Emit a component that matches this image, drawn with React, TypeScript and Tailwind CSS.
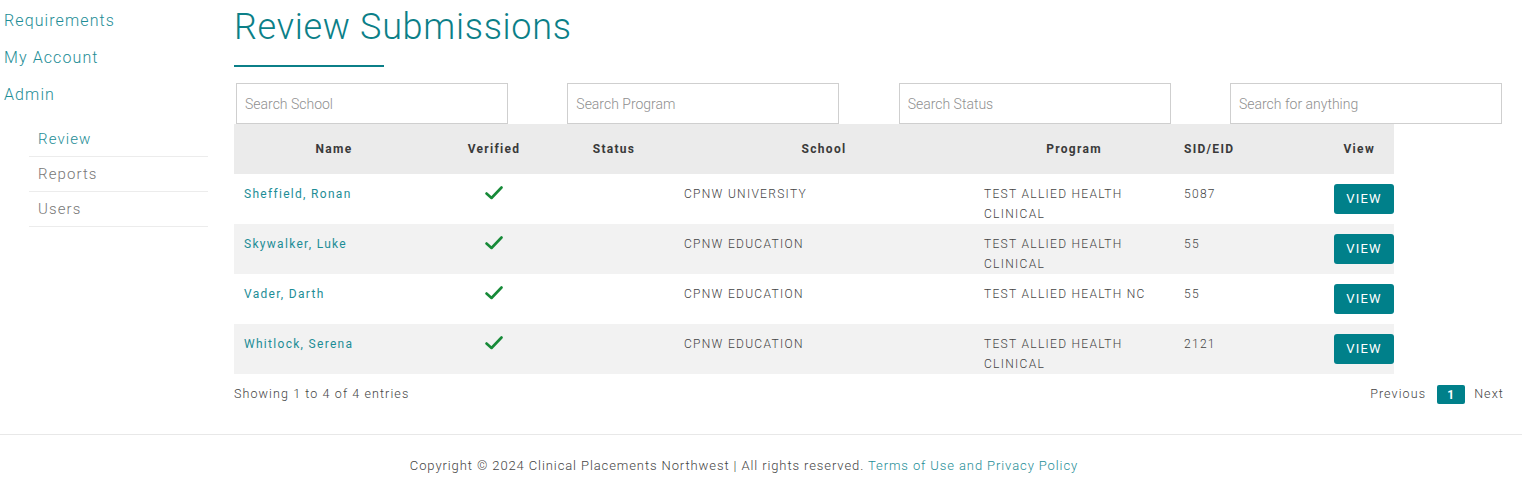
import { Fragment } from 'react';

const rows = [
  { name: 'Sheffield, Ronan', school: 'CPNW UNIVERSITY', program: 'TEST ALLIED HEALTH CLINICAL', sid: '5087' },
  { name: 'Skywalker, Luke', school: 'CPNW EDUCATION', program: 'TEST ALLIED HEALTH CLINICAL', sid: '55' },
  { name: 'Vader, Darth', school: 'CPNW EDUCATION', program: 'TEST ALLIED HEALTH NC', sid: '55' },
  { name: 'Whitlock, Serena', school: 'CPNW EDUCATION', program: 'TEST ALLIED HEALTH CLINICAL', sid: '2121' },
];

function Check() {
  return (
    <svg width="18" height="14" viewBox="0 0 18 14" fill="none">
      <path d="M1.5 7.5 L6.5 12 L16.5 1.5" stroke="#178a38" strokeWidth="2.6" strokeLinecap="round" strokeLinejoin="round" />
    </svg>
  );
}

export default function App() {
  const cols = 'grid grid-cols-[200px_120px_120px_300px_200px_110px_110px]';
  return (
    <div className="w-[1522px] h-[482px] bg-white font-['Roboto',sans-serif] overflow-hidden">
      <div className="flex h-[434px]">
        {/* Sidebar */}
        <aside className="w-[234px] shrink-0 pt-[2px]">
          <nav className="flex flex-col pl-[4px] text-[16px] font-light tracking-[1.1px] text-[#1d8d96]">
            <a className="leading-[37px]">Requirements</a>
            <a className="leading-[37px]">My Account</a>
            <a className="leading-[37px]">Admin</a>
          </nav>
          <ul className="ml-[29px] mt-[9px] w-[179px] text-[15px] font-light tracking-[1.1px]">
            <li className="h-[35px] leading-[35px] pl-[9px] border-b border-[#ececec] text-[#1d8d96]">Review</li>
            <li className="h-[35px] leading-[35px] pl-[9px] border-b border-[#ececec] text-[#777]">Reports</li>
            <li className="h-[35px] leading-[35px] pl-[9px] border-b border-[#ececec] text-[#777]">Users</li>
          </ul>
        </aside>

        {/* Main */}
        <main className="flex-1 pr-[20px]">
          <h1 className="text-[36px] font-light tracking-[0.7px] text-[#0b7f88] leading-[52px] mt-[1px]">Review Submissions</h1>
          <div className="w-[150px] h-[2px] bg-[#0b7f88] mt-[12px]" />

          <div className="flex justify-between mt-[16px] ml-[2px] w-[1266px]">
            {['Search School', 'Search Program', 'Search Status', 'Search for anything'].map((p) => (
              <input
                key={p}
                placeholder={p}
                className="w-[272px] h-[41px] border border-[#cfcfcf] px-[8px] text-[14px] font-light text-[#555] placeholder:text-[#8f8f8f] outline-none"
              />
            ))}
          </div>

          <div className="w-[1160px]">
            <div className={`${cols} h-[50px] bg-[#ebebeb] items-center text-[12px] font-bold tracking-[1.3px] text-[#3a3a3a]`}>
              <div className="text-center">Name</div>
              <div className="text-center">Verified</div>
              <div className="text-center">Status</div>
              <div className="text-center">School</div>
              <div className="text-center">Program</div>
              <div className="pl-[10px]">SID/EID</div>
              <div className="text-right pr-[19px]">View</div>
            </div>
            {rows.map((r, i) => (
              <div
                key={r.name}
                className={`${cols} h-[50px] text-[12px] tracking-[1.3px] leading-[20px] ${i % 2 ? 'bg-[#f2f2f2]' : 'bg-white'}`}
              >
                <div className="pl-[10px] pt-[10px] text-[#1d8d96]">{r.name}</div>
                <div className="flex justify-center pt-[12px]">
                  <Check />
                </div>
                <div />
                <div className="pl-[10px] pt-[10px] text-[#444] font-light">{r.school}</div>
                <div className="pl-[10px] pt-[10px] pr-[20px] text-[#444] font-light">{r.program}</div>
                <div className="pl-[10px] pt-[10px] text-[#444] font-light">{r.sid}</div>
                <div className="flex justify-end pt-[10px]">
                  <button className="w-[60px] h-[30px] rounded-[3px] bg-[#00808a] text-white text-[13px] tracking-[1.2px]">
                    VIEW
                  </button>
                </div>
              </div>
            ))}
          </div>

          <div className="flex items-center justify-between mt-[11px] w-[1270px] text-[12.5px] font-light tracking-[1.1px] text-[#444]">
            <span>Showing 1 to 4 of 4 entries</span>
            <div className="flex items-center">
              <span className="mr-[11px]">Previous</span>
              <span className="w-[28px] h-[19px] rounded-[2px] bg-[#00808a] text-white font-bold text-[12px] flex items-center justify-center">1</span>
              <span className="ml-[9px]">Next</span>
            </div>
          </div>
        </main>
      </div>

      <footer className="border-t border-[#e8e8e8] h-[62px] flex items-center justify-center pr-[34px] text-[13px] font-light tracking-[0.9px] text-[#444]">
        <span>
          Copyright © 2024 Clinical Placements Northwest | All rights reserved.{' '}
          <a className="text-[#1d8d96]">Terms of Use and Privacy Policy</a>
        </span>
      </footer>
    </div>
  );
}
